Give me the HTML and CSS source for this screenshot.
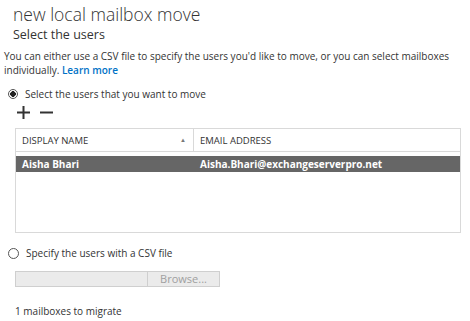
FILE: index.html
```html
<html lang="en">
<head>
    <meta charset="UTF-8">
    <title>new local mailbox move</title>
    <link rel="stylesheet" href="styles.css">
</head>
<body>
    <main class="page">
        <div class="title">new local mailbox move</div>
        <div class="subtitle">Select the users</div>
        <p class="intro"><span>You can either use a CSV file to specify the users you'd like to move, or you can select mailboxes</span> <span>individually. <a href="#">Learn more</a></span></p>

        <label class="choice">
            <span class="radio checked"></span>
            <span>Select the users that you want to move</span>
        </label>
        <div class="tools">
            <svg width="13" height="13" viewBox="0 0 13 13"><path d="M6.5 0v13M0 6.5h13" stroke="#333" stroke-width="2"/></svg>
            <svg width="13" height="13" viewBox="0 0 13 13"><path d="M0 6.5h13" stroke="#333" stroke-width="2"/></svg>
        </div>
        <div class="grid">
            <div class="grid-head">
                <div class="col name">DISPLAY NAME <span class="sort">&#9650;</span></div>
                <div class="col email">EMAIL ADDRESS</div>
            </div>
            <div class="grid-body">
                <div class="row selected">
                    <div class="col name">Aisha Bhari</div>
                    <div class="col email">Aisha.Bhari@exchangeserverpro.net</div>
                </div>
            </div>
        </div>

        <label class="choice second">
            <span class="radio"></span>
            <span>Specify the users with a CSV file</span>
        </label>
        <div class="file">
            <div class="file-path"></div>
            <div class="file-btn">Browse...</div>
        </div>
        <div class="count">1 mailboxes to migrate</div>
    </main>
</body>
</html>
```

FILE: styles.css
```css
*{
    --color-text:#333333;
    --color-border:#d9d9d9;
    --color-selected:#666666;
    --color-link:#0072c6;
}
body{
    margin: 0;
    background-color: #ffffff;
    color: var(--color-text);
    font-family: "Open Sans", "Liberation Sans", sans-serif;
    font-size: 10px;
}
.page{
    display: block;
    width: 470px;
}
.title{
    margin: 2px 0 0 13px;
    font-size: 17.5px;
    font-weight: 300;
    line-height: 24px;
}
.subtitle{
    margin: 0 0 0 13px;
    font-size: 12.5px;
    font-weight: 400;
    line-height: 17px;
}
.intro{
    margin: 6px 0 0 4px;
    line-height: 14px;
    & span{
        display: block;
    }
    & a{
        color: var(--color-link);
        text-decoration: none;
        font-weight: 600;
    }
}
.choice{
    display: flex;
    align-items: center;
    gap: 7px;
    margin: 10px 0 0 8px;
    line-height: 14px;
    &.second{
        margin-top: 13px;
    }
}
.radio{
    width: 10px;
    height: 10px;
    border: 1px solid #555;
    border-radius: 50%;
    box-sizing: border-box;
    background: #fff;
    flex: none;
    &.checked{
        background: radial-gradient(circle, #222 0 2.6px, #fff 3px);
    }
}
.second .radio{
    width: 11px;
    height: 11px;
}
.tools{
    display: flex;
    gap: 10px;
    margin: 5px 0 0 17px;
    height: 13px;
}
.grid{
    margin: 9px 0 0 15px;
    width: 446px;
    height: 105px;
    border: 1px solid var(--color-border);
    box-sizing: border-box;
    display: flex;
    flex-direction: column;
}
.grid-head{
    display: flex;
    height: 22px;
    border-bottom: 1px solid var(--color-border);
    font-size: 9.5px;
    & .col{
        display: flex;
        align-items: center;
    }
    & .name{
        border-right: 1px solid var(--color-border);
    }
}
.sort{
    margin-left: auto;
    font-size: 6px;
    color: #777;
    padding-right: 7px;
}
.col{
    padding-left: 6px;
    box-sizing: border-box;
    &.name{
        width: 178px;
    }
    &.email{
        flex: 1;
    }
}
.grid-body{
    padding-top: 4px;
}
.row{
    display: flex;
    height: 16px;
    align-items: center;
    &.selected{
        background-color: var(--color-selected);
        color: #ffffff;
        font-weight: 700;
        font-size: 10px;
    }
}
.file{
    display: flex;
    margin: 11px 0 0 15px;
    width: 205px;
    height: 16px;
    border: 1px solid #cfcfcf;
    background: #ebebeb;
    box-sizing: border-box;
}
.file-path{
    width: 131px;
    border-right: 1px solid #cfcfcf;
}
.file-btn{
    flex: 1;
    text-align: center;
    color: #a0a0a0;
    font-size: 11px;
    line-height: 14px;
}
.count{
    margin: 17px 0 0 15px;
    line-height: 14px;
}
```
